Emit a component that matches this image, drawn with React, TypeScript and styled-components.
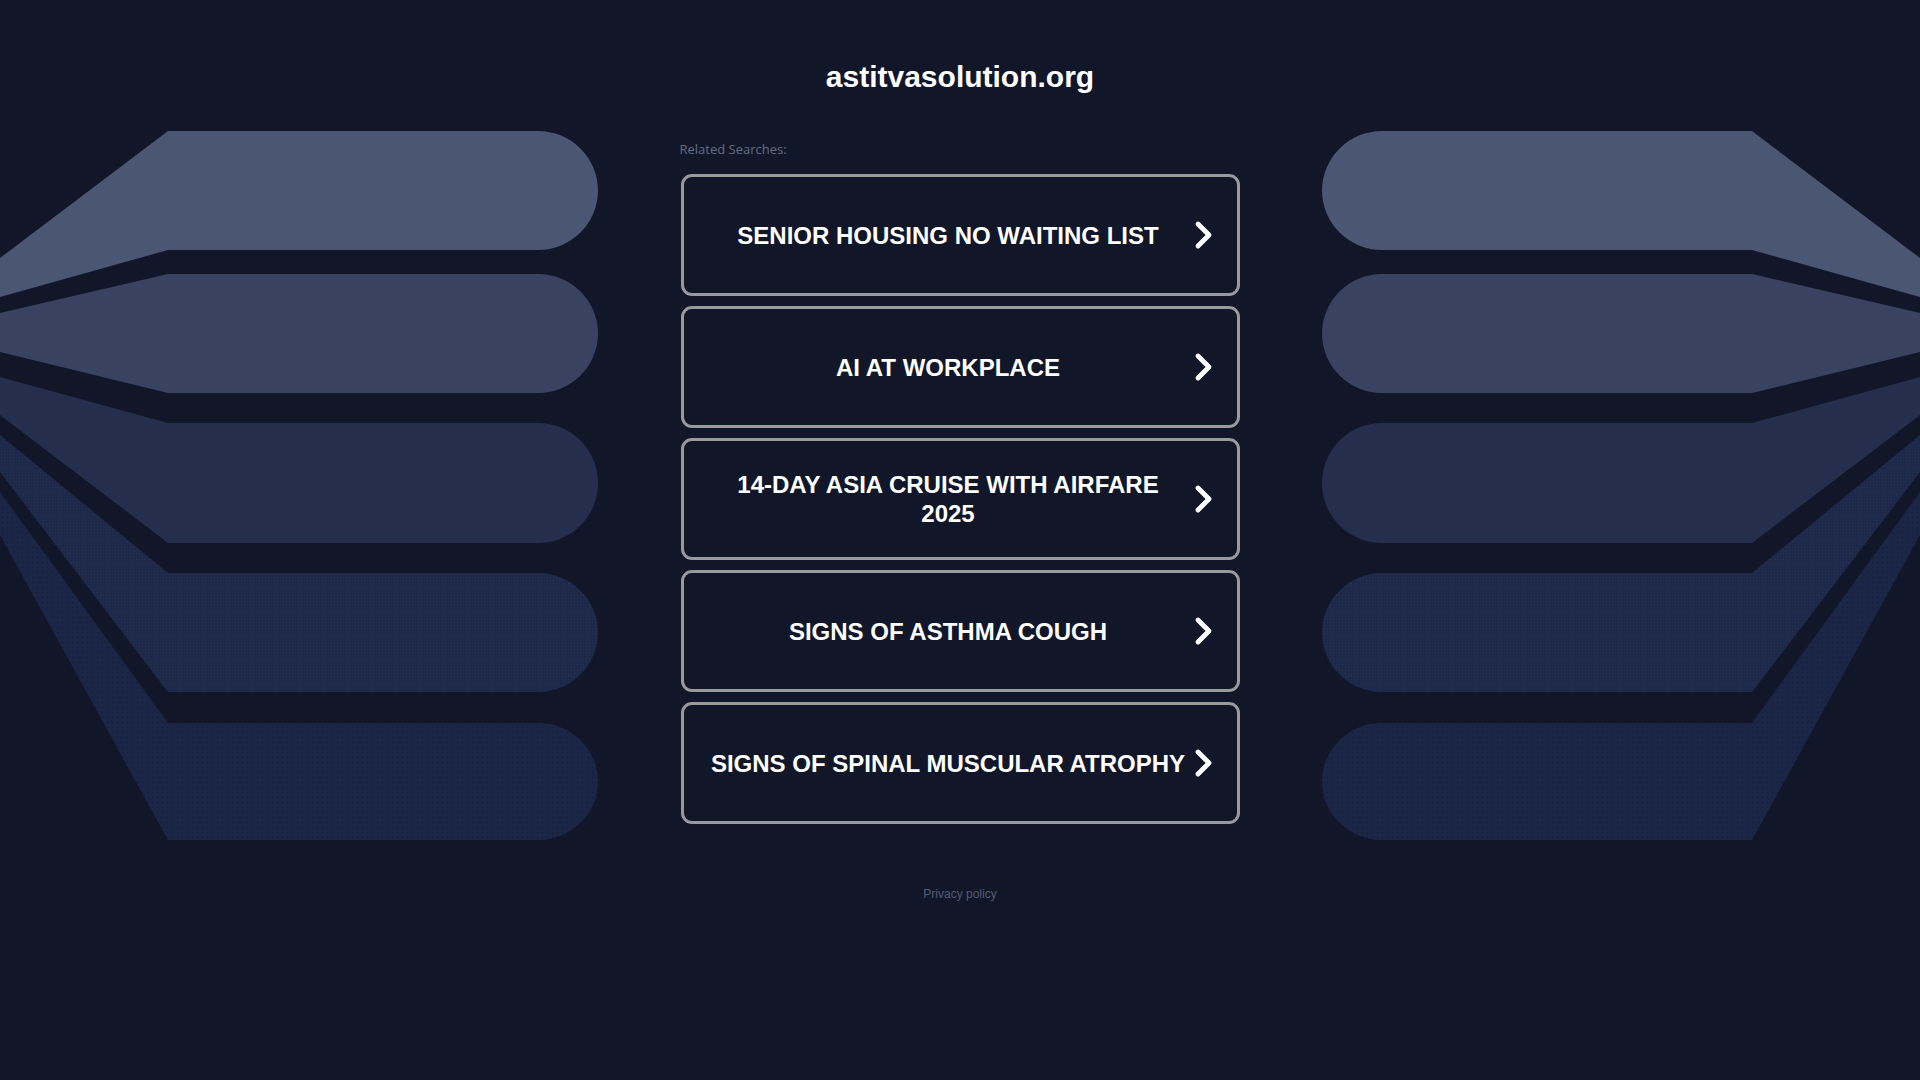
import styled, { createGlobalStyle } from "styled-components";

const searches = [
  "SENIOR HOUSING NO WAITING LIST",
  "AI AT WORKPLACE",
  "14-DAY ASIA CRUISE WITH AIRFARE 2025",
  "SIGNS OF ASTHMA COUGH",
  "SIGNS OF SPINAL MUSCULAR ATROPHY",
];

// left-side fan shapes; the right side is the same drawing mirrored
const pills = [
  { d: "M0,258 L168,131 L538,131 A60,59.5 0 0 1 538,250 L168,250 L0,297 Z", fill: "#4b5673" },
  { d: "M0,313 L168,274 L538,274 A60,59.5 0 0 1 538,393 L168,393 L0,352 Z", fill: "#394260" },
  { d: "M0,377 L168,423 L538,423 A60,60 0 0 1 538,543 L168,543 L0,415 Z", fill: "#252e4c" },
  { d: "M0,435 L168,573 L538,573 A60,59.5 0 0 1 538,692 L168,692 L0,472 Z", fill: "url(#dotsFine)" },
  { d: "M0,492 L168,723 L538,723 A60,58.5 0 0 1 538,840 L168,840 L0,535 Z", fill: "url(#dotsCoarse)" },
];

const GlobalStyle = createGlobalStyle`
  html, body {
    margin: 0;
    padding: 0;
    background: #111729;
  }
`;

const Page = styled.div`
  position: relative;
  min-height: 100vh;
  overflow: hidden;
  font-family: "Liberation Sans", Arial, sans-serif;
`;

const Backdrop = styled.svg`
  position: absolute;
  top: 0;
  left: 0;
  width: 1920px;
  height: 1080px;
  z-index: 0;
`;

const Content = styled.main`
  position: relative;
  z-index: 1;
  display: flex;
  flex-direction: column;
  align-items: center;
  padding-top: 59px;
`;

const Title = styled.h1`
  margin: 0;
  font-size: 30px;
  line-height: 36px;
  font-weight: 700;
  color: #ffffff;
`;

const Column = styled.section`
  width: 559px;
  margin-top: 46px;
  display: flex;
  flex-direction: column;
`;

const Label = styled.p`
  margin: 0 0 16px -1px;
  font-family: "Open Sans", "Liberation Sans", sans-serif;
  font-size: 13px;
  line-height: 17px;
  color: #646c82;
`;

const List = styled.div`
  display: flex;
  flex-direction: column;
  gap: 10px;
`;

const ResultLink = styled.a`
  box-sizing: border-box;
  height: 122px;
  display: flex;
  align-items: center;
  padding: 0 24px 0 25px;
  border: 3px solid #9a9a9c;
  border-radius: 11px;
  background: #111729;
  color: #ffffff;
  text-decoration: none;
  cursor: pointer;

  span {
    flex: 1;
    text-align: center;
    font-size: 24px;
    line-height: 29px;
    font-weight: 700;
  }

  svg {
    flex: none;
    margin-left: 5px;
  }
`;

const Footer = styled.footer`
  margin-top: 63px;
  font-size: 12px;
  line-height: 14px;
  color: #535b72;
`;

const Chevron = () => (
  <svg width="20" height="30" viewBox="0 0 20 30">
    <polyline
      points="5,4 16,15 5,26"
      fill="none"
      stroke="#ffffff"
      strokeWidth="4.8"
      strokeLinecap="round"
      strokeLinejoin="round"
    />
  </svg>
);

const FanShapes = () => (
  <>
    {pills.map((p, i) => (
      <path key={i} d={p.d} fill={p.fill} />
    ))}
  </>
);

export default function App() {
  return (
    <Page>
      <GlobalStyle />
      <Backdrop viewBox="0 0 1920 1080">
        <defs>
          <pattern id="dotsFine" width="3" height="3" patternUnits="userSpaceOnUse">
            <rect width="3" height="3" fill="#1e2848" />
            <circle cx="1.5" cy="1.5" r="0.5" fill="#26325a" />
          </pattern>
          <pattern id="dotsCoarse" width="5" height="5" patternUnits="userSpaceOnUse">
            <rect width="5" height="5" fill="#1b2647" />
            <circle cx="2.5" cy="2.5" r="0.8" fill="#141c36" />
          </pattern>
        </defs>
        <FanShapes />
        <g transform="translate(1920,0) scale(-1,1)">
          <FanShapes />
        </g>
      </Backdrop>
      <Content>
        <Title>astitvasolution.org</Title>
        <Column>
          <Label>Related Searches:</Label>
          <List>
            {searches.map((s) => (
              <ResultLink key={s}>
                <span>{s}</span>
                <Chevron />
              </ResultLink>
            ))}
          </List>
        </Column>
        <Footer>Privacy policy</Footer>
      </Content>
    </Page>
  );
}
